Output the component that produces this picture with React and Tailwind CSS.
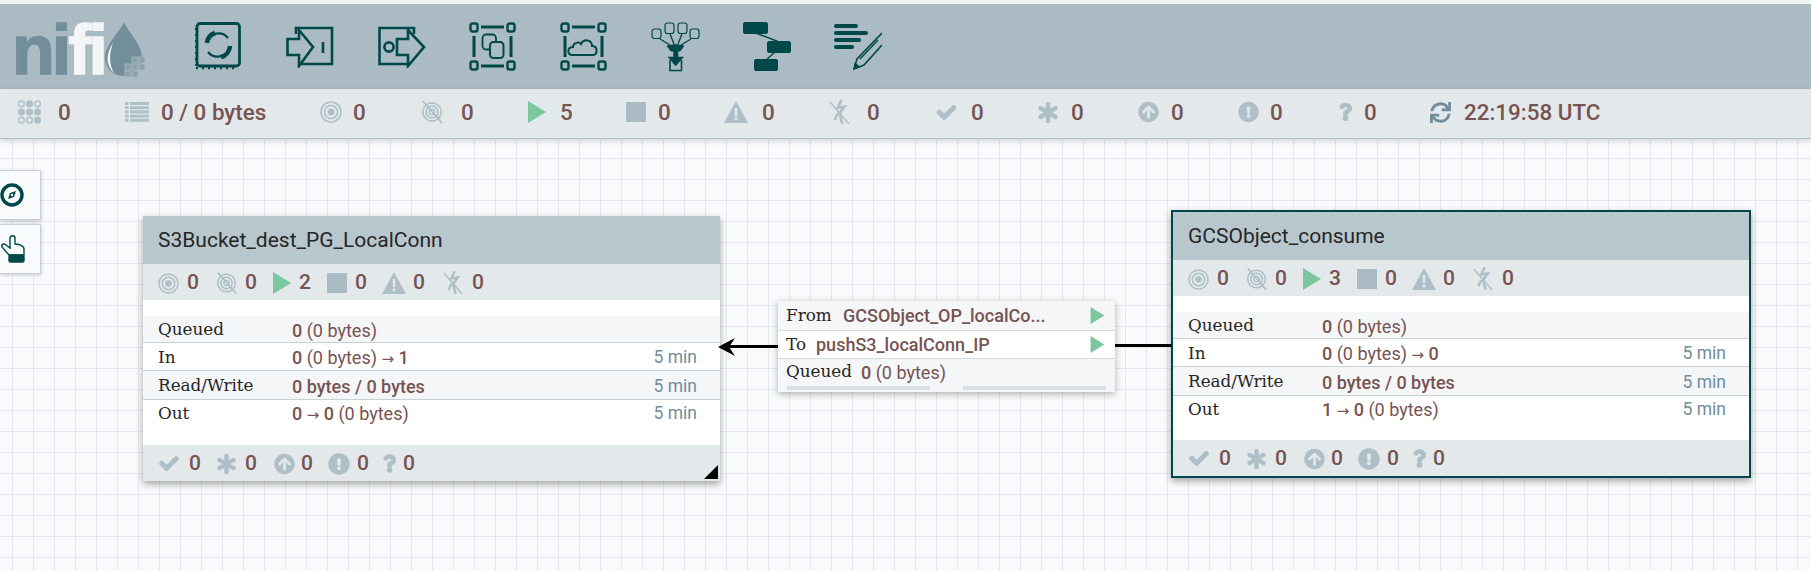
import React from 'react';
import { FaCheck, FaAsterisk, FaArrowCircleUp, FaExclamationCircle, FaQuestion, FaSync } from 'react-icons/fa';

const DARK = '#004849';
const MUTED = '#aebfc7';

// flowfont glyphs are not in any package, so they are drawn here
const ClusterIcon = ({ className }) => (
  <svg viewBox="0 0 24 24" className={className}>
    {[3.5, 12, 20.5].map((y, r) =>
      [3.5, 12, 20.5].map((x, c) => (
        <circle key={`${r}${c}`} cx={x} cy={y} r="3" fill={r === 1 || (r === 2 && c === 2) || (r === 0 && c === 1) ? MUTED : 'none'} stroke={MUTED} strokeWidth="1.5" />
      ))
    )}
  </svg>
);

const ListIcon = ({ className }) => (
  <svg viewBox="0 0 24 20" className={className} fill={MUTED}>
    {[0, 4.2, 8.4, 12.6, 16.8].map((y) => (
      <g key={y}>
        <rect x="0" y={y} width="3.5" height="3" />
        <rect x="5" y={y} width="19" height="3" />
      </g>
    ))}
  </svg>
);

const TargetIcon = ({ className }) => (
  <svg viewBox="0 0 22 22" className={className} fill="none" stroke={MUTED}>
    <circle cx="11" cy="11" r="10" strokeWidth="1.6" />
    <circle cx="11" cy="11" r="6.5" strokeWidth="1.6" />
    <circle cx="11" cy="11" r="3" fill={MUTED} strokeWidth="1" />
  </svg>
);

const DisabledIcon = ({ className }) => (
  <svg viewBox="0 0 24 24" className={className} fill="none" stroke={MUTED}>
    <circle cx="12" cy="12" r="10" strokeWidth="1.8" />
    <circle cx="12" cy="12" r="6.5" strokeWidth="1.8" />
    <circle cx="12" cy="12" r="3" strokeWidth="1.6" />
    <path d="M2 0 L23 24" strokeWidth="2" />
  </svg>
);

const PlayIcon = ({ className }) => (
  <svg viewBox="0 0 18 22" className={className}>
    <polygon points="0,0 18,11 0,22" fill="#7dc7a0" />
  </svg>
);

const StopIcon = ({ className }) => <div className={`bg-[#aabbc3] ${className}`} />;

const WarnIcon = ({ className }) => (
  <svg viewBox="0 0 24 22" className={className}>
    <path d="M12 0 L24 22 L0 22 Z" fill={MUTED} />
    <rect x="10.7" y="7" width="2.6" height="8" fill="#e3e8eb" />
    <rect x="10.7" y="16.5" width="2.6" height="2.8" fill="#e3e8eb" />
  </svg>
);

const NotTransmittingIcon = ({ className }) => (
  <svg viewBox="0 0 22 26" className={className} fill="none" stroke={MUTED}>
    <path d="M13 0 L9 8 L16 7 L11 14 L14 25" strokeWidth="2.8" />
    <path d="M9 14 L6 21" strokeWidth="2.4" />
    <path d="M1 2 L21 25" strokeWidth="1.6" />
  </svg>
);

const ProcessorIcon = () => (
  <svg width="46" height="49" viewBox="0 0 46 49" fill="none" stroke={DARK}>
    <rect x="2" y="1.5" width="42.5" height="42.5" rx="3" strokeWidth="2.8" />
    <path d="M1 6v38M1 46h42" strokeWidth="2.4" strokeDasharray="2 4" />
    <path d="M12 20 A12 12 0 0 1 33 16" strokeWidth="2.2" />
    <path d="M12 21 A12 12 0 0 1 20 11" strokeWidth="4.5" />
    <path d="M34 26 A12 12 0 0 1 13 30" strokeWidth="2.2" />
    <path d="M35 24 A12 12 0 0 1 26 35" strokeWidth="4.5" />
  </svg>
);

const InputPortIcon = () => (
  <svg width="48" height="42" viewBox="0 0 48 42" fill="none" stroke={DARK} strokeWidth="2.6">
    <path d="M10 8 V2 H46 V38 H14" />
    <path d="M1.5 13 H13 V4 L27 21 L13 40 V29 H1.5 Z" />
    <path d="M37 16 V27" />
  </svg>
);

const OutputPortIcon = () => (
  <svg width="48" height="42" viewBox="0 0 48 42" fill="none" stroke={DARK} strokeWidth="2.6">
    <path d="M36 8 V2 H1.5 V38 H30" />
    <circle cx="11" cy="21" r="4.6" />
    <path d="M19 13 H30 V4 L46 21 L30 40 V29 H19 Z" />
  </svg>
);

const Corners = () => (
  <>
    <rect x="1.5" y="1.5" width="7" height="8" rx="2" />
    <rect x="38.5" y="1.5" width="7" height="8" rx="2" />
    <rect x="1.5" y="39.5" width="7" height="8" rx="2" />
    <rect x="38.5" y="39.5" width="7" height="8" rx="2" />
    <path d="M12 5 H35 M12 44 H35 M5 14 V35 M42 14 V35" strokeWidth="3" />
  </>
);

const GroupIcon = () => (
  <svg width="47" height="49" viewBox="0 0 47 49" fill="none" stroke={DARK} strokeWidth="2.4">
    <Corners />
    <rect x="13.5" y="12.5" width="13.5" height="15" rx="3.5" strokeWidth="1.8" />
    <rect x="21" y="20" width="13.5" height="16" rx="3.5" strokeWidth="2" fill="#aabbc3" />
  </svg>
);

const RemoteGroupIcon = () => (
  <svg width="47" height="49" viewBox="0 0 47 49" fill="none" stroke={DARK} strokeWidth="2.4">
    <Corners />
    <path d="M12 33 C7 33 7 25 13 25 C13 21 19 19 21 22 C24 16 32 18 32 24 C38 24 38 33 33 33 Z" strokeWidth="2" />
  </svg>
);

const FunnelIcon = () => (
  <svg width="49" height="50" viewBox="0 0 49 50" fill="none" stroke={DARK}>
    <rect x="1" y="7" width="9" height="9.5" rx="2.5" strokeWidth="1.2" />
    <rect x="14" y="1" width="9" height="10.5" rx="2.5" strokeWidth="1.2" />
    <rect x="27" y="1" width="9" height="10.5" rx="2.5" strokeWidth="1.2" />
    <rect x="39" y="7" width="9" height="9.5" rx="2.5" strokeWidth="1.2" />
    <path d="M9 17 L19 23 M19 12 L23 22 M31 12 L27 22 M40 17 L30 23" strokeWidth="1.4" />
    <path d="M16 24 Q24.5 21 33 24 L29 29 H20 Z" fill={DARK} strokeWidth="1" />
    <path d="M22.5 29 H27 V35 H32.5 L24.7 44 L17 35 H22.5 Z" fill={DARK} strokeWidth="0.5" />
    <path d="M19 38 V48.5 H30.5 V38" strokeWidth="1.6" />
  </svg>
);

const TemplateIcon = () => (
  <svg width="48" height="49" viewBox="0 0 48 49" fill={DARK} stroke={DARK}>
    <rect x="0.5" y="0.5" width="24" height="11" rx="1.5" />
    <rect x="24.5" y="19.5" width="23" height="11" rx="1.5" />
    <rect x="11.5" y="37.5" width="23" height="11" rx="1.5" />
    <path d="M13 11 L36 20 M32 30 L23 38" strokeWidth="1.4" />
  </svg>
);

const LabelIcon = () => (
  <svg width="48" height="48" viewBox="0 0 48 48" fill="none" stroke={DARK}>
    <path d="M2 3 H22 M2 10 H32 M2 17 H25 M2 24 H18" strokeWidth="4" strokeLinecap="round" />
    <path d="M48 10 L23 36 L20 46 L30 42 L48 22" strokeWidth="1.6" />
    <path d="M26 36 L44 17" strokeWidth="1.4" />
    <path d="M20 46 L21 40 L26 44 Z" fill={DARK} />
  </svg>
);

const Logo = () => (
  <div className="flex items-start w-[195px] pl-[12px] shrink-0">
    <div className="font-['Liberation_Sans'] font-bold text-[70px] leading-[70px] tracking-[-3px] mt-[6px] w-[92px] whitespace-nowrap [-webkit-text-stroke:1.5px_currentColor]">
      <span className="text-[#728e9b]">ni</span>
      <span className="text-[#f3f5f6]">fi</span>
    </div>
    <svg width="42" height="58" viewBox="0 0 42 58" className="mt-[13px]">
      <path d="M20 0 C24 10 38 22 38 36 C38 47 30 54 20 54 C9 54 1 46 1 36 C1 22 16 10 20 0 Z" fill="#728e9b" />
      <path d="M9 21 C2 31 1 43 10 51 C5 42 5 32 9 21 Z" fill="#f3f5f6" />
      {[[28, 35], [35, 35], [21, 42], [28, 42], [35, 42], [21, 49], [28, 49]].map(([x, y]) => (
        <rect key={`${x}${y}`} x={x} y={y} width="6" height="6" fill="#8ba0ab" stroke="#aabbc3" strokeWidth="0.8" />
      ))}
    </svg>
  </div>
);

const toolbar = [ProcessorIcon, InputPortIcon, OutputPortIcon, GroupIcon, RemoteGroupIcon, FunnelIcon, TemplateIcon, LabelIcon];

// FA5 glyphs sit thinner than the FA4 ones in the picture, a stroke thickens them
const THICK = { stroke: 'currentColor', strokeWidth: 30 };

const statusItems = [
  { Icon: ClusterIcon, cls: 'w-[23px] h-[24px]', gap: 'ml-[17px]', w: 'w-[107px]', text: '0' },
  { Icon: ListIcon, cls: 'w-[24px] h-[20px]', gap: 'ml-[12px]', w: 'w-[195px]', text: '0 / 0 bytes' },
  { Icon: TargetIcon, cls: 'w-[22px] h-[22px]', gap: 'ml-[11px]', w: 'w-[101px]', text: '0' },
  { Icon: DisabledIcon, cls: 'w-[22px] h-[24px]', gap: 'ml-[18px]', w: 'w-[107px]', text: '0' },
  { Icon: PlayIcon, cls: 'w-[18px] h-[22px]', gap: 'ml-[14px]', w: 'w-[98px]', text: '5' },
  { Icon: StopIcon, cls: 'w-[20px] h-[20px]', gap: 'ml-[12px]', w: 'w-[98px]', text: '0' },
  { Icon: WarnIcon, cls: 'w-[24px] h-[22px]', gap: 'ml-[14px]', w: 'w-[105px]', text: '0' },
  { Icon: NotTransmittingIcon, cls: 'w-[21px] h-[25px]', gap: 'ml-[17px]', w: 'w-[107px]', text: '0' },
  { Icon: FaCheck, cls: 'w-[21px] h-[19px] text-[#aebfc7]', gap: 'ml-[14px]', w: 'w-[102px]', text: '0', extra: THICK },
  { Icon: FaAsterisk, cls: 'w-[20px] h-[21px] text-[#aebfc7]', gap: 'ml-[13px]', w: 'w-[100px]', text: '0', extra: THICK },
  { Icon: FaArrowCircleUp, cls: 'w-[21px] h-[22px] text-[#aebfc7]', gap: 'ml-[12px]', w: 'w-[100px]', text: '0' },
  { Icon: FaExclamationCircle, cls: 'w-[21px] h-[22px] text-[#aebfc7]', gap: 'ml-[11px]', w: 'w-[101px]', text: '0' },
  { Icon: FaQuestion, cls: 'w-[13px] h-[20px] text-[#aebfc7]', gap: 'ml-[12px]', w: 'w-[91px]', text: '0', extra: THICK },
  { Icon: FaSync, cls: 'w-[21px] h-[21px] text-[#728e9b]', gap: 'ml-[13px]', w: 'w-[190px]', text: '22:19:58 UTC' },
];

const Stat = ({ Icon, cls, gap, text, extra }) => (
  <div className="flex items-center">
    <Icon className={cls} {...extra} />
    <span className={`${gap} text-[22.4px]`}>{text}</span>
  </div>
);

const Arrow = () => <span className="font-['DejaVu_Sans'] text-[15px] text-[#775351]">→</span>;

const Row = ({ label, children, time, cls }) => (
  <div className={`flex items-center pl-[15px] pr-[23px] ${cls}`}>
    <span className="w-[134px] font-['DejaVu_Serif'] text-[16.8px] text-[#262626] shrink-0">{label}</span>
    <span className="flex-1 text-[18px] text-[#775351] whitespace-nowrap">{children}</span>
    {time && <span className="text-[17.5px] text-[#728e9b]">5 min</span>}
  </div>
);

const B = ({ children }) => <b className="font-medium">{children}</b>;

const GroupNode = ({ title, running, inOut, outFrom, pos, selected, resize }) => (
  <div className={`absolute flex flex-col shadow-[0_3px_7px_rgba(0,0,0,0.35)] bg-white ${pos} ${selected ? 'border-2 border-[#004849]' : ''}`}>
    <div className="flex items-center h-[48px] pt-[2px] pl-[15px] bg-[#b8c6cd] text-[#262626] text-[21px]">{title}</div>
    <div className="flex items-center h-[36px] pt-[2px] pl-[15px] bg-[#e3e8eb] text-[21px] font-medium text-[#775351]">
      <TargetIcon className="w-[21px] h-[21px]" />
      <span className="ml-[8px] w-[29px]">0</span>
      <DisabledIcon className="w-[21px] h-[22px]" />
      <span className="ml-[8px] w-[28px]">0</span>
      <PlayIcon className="w-[18px] h-[22px]" />
      <span className="ml-[8px] w-[28px]">{running}</span>
      <StopIcon className="w-[20px] h-[20px]" />
      <span className="ml-[8px] w-[27px]">0</span>
      <WarnIcon className="w-[24px] h-[22px]" />
      <span className="ml-[7px] w-[30px]">0</span>
      <NotTransmittingIcon className="w-[20px] h-[24px]" />
      <span className="ml-[9px]">0</span>
    </div>
    <div className="h-[16px] shrink-0" />
    <Row label="Queued" cls="h-[27px] pt-[2px] bg-[#f4f6f7] border-b border-[#c7d2d7]">
      <B>0</B> (0 bytes)
    </Row>
    <Row label="In" time cls="h-[28px] pt-[2px] border-b border-[#c7d2d7]">
      <B>0</B> (0 bytes) <Arrow /> <B>{inOut}</B>
    </Row>
    <Row label="Read/Write" time cls="h-[29px] pt-[2px] bg-[#f4f6f7] border-b border-[#c7d2d7]">
      <B>0 bytes / 0 bytes</B>
    </Row>
    <Row label="Out" time cls="h-[27px]">
      <B>{outFrom}</B> <Arrow /> <B>0</B> (0 bytes)
    </Row>
    <div className="flex-1" />
    <div className="relative flex items-center h-[36px] pt-[1px] pl-[16px] bg-[#e3e8eb] text-[21px] font-medium text-[#775351]">
      <FaCheck className="w-[20px] h-[19px] text-[#aebfc7]" {...THICK} />
      <span className="ml-[10px] w-[28px]">0</span>
      <FaAsterisk className="w-[19px] h-[20px] text-[#aebfc7]" {...THICK} />
      <span className="ml-[9px] w-[29px]">0</span>
      <FaArrowCircleUp className="w-[21px] h-[22px] text-[#aebfc7]" />
      <span className="ml-[6px] w-[27px]">0</span>
      <FaExclamationCircle className="w-[22px] h-[22px] text-[#aebfc7]" />
      <span className="ml-[7px] w-[26px]">0</span>
      <FaQuestion className="w-[13px] h-[19px] text-[#aebfc7]" {...THICK} />
      <span className="ml-[7px]">0</span>
      {resize && (
        <svg width="14" height="14" viewBox="0 0 14 14" className="absolute right-[2px] bottom-[2px]">
          <polygon points="14,0 14,14 0,14" fill="#000" />
        </svg>
      )}
    </div>
  </div>
);

const ConnectionLabel = () => (
  <div className="absolute left-[778px] top-[162px] w-[337px] h-[91px] flex flex-col bg-white shadow-[0_2px_7px_rgba(0,0,0,0.3)] text-[18px] text-[#775351]">
    <div className="flex items-center h-[30px] pl-[8px] pr-[10px] bg-[#f4f6f7] border-b border-[#d5dde1]">
      <span className="font-['DejaVu_Serif'] text-[16.8px] text-[#262626] w-[57px]">From</span>
      <span className="font-medium flex-1">GCSObject_OP_localCo...</span>
      <PlayIcon className="w-[15px] h-[17px]" />
    </div>
    <div className="flex items-center h-[28px] pl-[8px] pr-[10px] border-b border-[#d5dde1]">
      <span className="font-['DejaVu_Serif'] text-[16.8px] text-[#262626] w-[30px]">To</span>
      <span className="font-medium flex-1">pushS3_localConn_IP</span>
      <PlayIcon className="w-[15px] h-[17px]" />
    </div>
    <div className="flex flex-col flex-1 px-[8px] bg-[#f4f6f7]">
      <div className="flex items-center h-[26px]">
        <span className="font-['DejaVu_Serif'] text-[16.8px] text-[#262626] w-[75px]">Queued</span>
        <span><B>0</B> (0 bytes)</span>
      </div>
      <div className="flex justify-between px-[1px] mt-[1px]">
        <div className="w-[143px] h-[4px] bg-[#d9dfe3]" />
        <div className="w-[143px] h-[4px] bg-[#d9dfe3]" />
      </div>
    </div>
  </div>
);

const App = () => {
  return (
    <div className="w-[1811px] h-[571px] overflow-hidden flex flex-col bg-white font-['Roboto',sans-serif]">
      <div className="h-[4px] shrink-0 bg-[#f2f3f4]" />
      <div className="h-[85px] shrink-0 flex items-center bg-[#aabbc3]">
        <Logo />
        {toolbar.map((Icon, i) => (
          <div key={i} className="w-[91.3px] shrink-0 flex items-center">
            <Icon />
          </div>
        ))}
      </div>
      <div className="h-[50px] shrink-0 z-10 flex items-center pb-[2px] pl-[18px] bg-[#e3e8eb] border-b border-[#b5c0c6] shadow-[0_2px_6px_rgba(0,0,0,0.15)] font-medium text-[#775351]">
        {statusItems.map((item) => (
          <div key={item.cls + item.w} className={`${item.w} shrink-0`}>
            <Stat {...item} />
          </div>
        ))}
      </div>
      <div className="relative flex-1 bg-[#f9fafb] bg-[linear-gradient(to_right,#e3e8eb_1px,transparent_1px),linear-gradient(to_bottom,#e3e8eb_1px,transparent_1px)] bg-[size:21px_21px] bg-[position:12px_19px]">
        <div className="absolute left-0 top-[31px] flex flex-col gap-[4px]">
          <div className="w-[41px] h-[50px] flex items-center bg-[#f9fafb] border border-l-0 border-[#c7cfd3] shadow-[0_1px_4px_rgba(0,0,0,0.2)]">
            <svg width="24" height="24" viewBox="0 0 24 24" fill="none">
              <circle cx="12" cy="12" r="10" stroke={DARK} strokeWidth="3.4" />
              <path d="M8 16 L10 10 L16 8 L14 14 Z" fill={DARK} />
              <circle cx="12" cy="12" r="1.2" fill="#f9fafb" />
            </svg>
          </div>
          <div className="w-[41px] h-[50px] flex items-center bg-[#f9fafb] border border-l-0 border-[#c7cfd3] shadow-[0_1px_4px_rgba(0,0,0,0.2)]">
            <svg width="25" height="28" viewBox="0 0 25 28" fill="none" stroke={DARK} strokeWidth="1.4">
              <path d="M9 20 L2 12 C1 9 4 8 6 10 L10 13 V3 C10 0 15 0 15 3 V9 C19 9 24 11 24 14 V20 Z" />
              <rect x="9" y="20" width="15" height="7" rx="1.5" fill={DARK} />
            </svg>
          </div>
        </div>
        <GroupNode title="S3Bucket_dest_PG_LocalConn" running="2" inOut="1" outFrom="0" pos="left-[143px] top-[77px] w-[577px] h-[265px]" resize />
        <GroupNode title="GCSObject_consume" running="3" inOut="0" outFrom="1" pos="left-[1171px] top-[71px] w-[580px] h-[268px]" selected />
        <div className="absolute left-[724px] top-[206px] w-[54px] h-[3px] bg-black" />
        <svg width="20" height="18" viewBox="0 0 20 18" className="absolute left-[718px] top-[199px]">
          <polygon points="0,9 17,0 11,9 17,18" fill="#000" />
        </svg>
        <div className="absolute left-[1115px] top-[205px] w-[57px] h-[3px] bg-black" />
        <ConnectionLabel />
      </div>
    </div>
  );
};

export default App;
